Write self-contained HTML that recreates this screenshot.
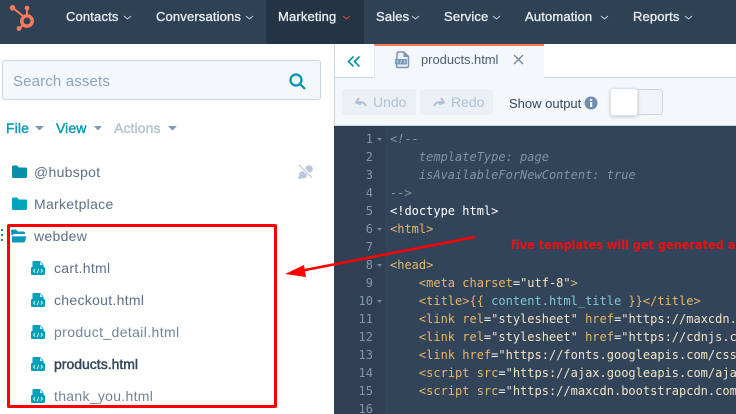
<!DOCTYPE html>
<html><head><meta charset="utf-8">
<style>
*{box-sizing:border-box}
html,body{margin:0;padding:0;width:736px;height:414px;overflow:hidden;background:#fff}
body{position:relative;font-family:"Liberation Sans",sans-serif}
.a{position:absolute;white-space:nowrap}
.n{top:9px;line-height:16px;font-size:13px;color:#e6ebf0;font-weight:normal;letter-spacing:.15px;-webkit-text-stroke:.35px #e6ebf0}
.t{font-size:14px;line-height:18px;color:#5c7088;letter-spacing:.3px}
.c{position:absolute;left:390px;font:12px/18px "DejaVu Sans Mono",monospace;white-space:pre;color:#e5b567}
.g{position:absolute;width:42px;text-align:right;left:331px;font:12px/18px "DejaVu Sans Mono",monospace;color:#8296aa}
.w{color:#fff}.e{color:#f2e3c4}.q{color:#fff}.b{color:#7fc6d6}.m{color:#8093a8;font-style:italic}
.h{font-size:14px;line-height:18px;font-weight:normal;-webkit-text-stroke:.4px currentColor;letter-spacing:.1px}
</style></head><body>
<div class="a" style="left:0;top:0;width:736px;height:44px;background:#2f4154"></div>
<div class="a" style="left:266px;top:0;width:98px;height:44px;background:#253444"></div>
<svg class="a" style="left:8px;top:3px" width="30" height="30" viewBox="0 0 30 30"><g fill="none" stroke="#ff7a59" stroke-width="2"><circle cx="19" cy="18" r="5.200" stroke-width="3.400"/><path d="M5 5 L15 13M19 5V12M15 22L11 26"/></g><g fill="#ff7a59"><circle cx="4.500" cy="4.800" r="2.800"/><circle cx="19" cy="5" r="2.300"/><circle cx="11" cy="25.500" r="2.400"/></g></svg>
<div class="a n" style="left:66px">Contacts</div>
<div class="a n" style="left:156px">Conversations</div>
<div class="a n" style="left:278px">Marketing</div>
<div class="a n" style="left:376px">Sales</div>
<div class="a n" style="left:444px">Service</div>
<div class="a n" style="left:525px">Automation</div>
<div class="a n" style="left:633px">Reports</div>
<svg class="a" style="left:0;top:0" width="736" height="44" fill="none" stroke="#c5d0da" stroke-width="1"><path d="M124 16l3.500 3 3.500-3M246 16l3.500 3 3.500-3M412 16l3.500 3 3.500-3M493 16l3.500 3 3.500-3M601 16l3.500 3 3.500-3M685 16l3.500 3 3.500-3"/><path d="M343 16l3.500 3 3.500-3" stroke="#d0553f"/></svg>

<div class="a" style="left:2px;top:60px;width:319px;height:40px;background:#f5f8fa;border:1px solid #cbd6e2;border-radius:3px"></div>
<div class="a" style="left:13px;top:71px;font-size:15px;line-height:20px;color:#8ea4ba;letter-spacing:.15px;padding-top:1px">Search assets</div>
<svg class="a" style="left:288px;top:72px" width="19" height="19" fill="none" stroke="#0091ae" stroke-width="2.200"><circle cx="8" cy="8" r="5.500"/><path d="M12 12l5 5"/></svg>
<div class="a h" style="left:6px;top:119px;color:#0f97b2">File</div>
<div class="a h" style="left:56px;top:119px;color:#0f97b2">View</div>
<div class="a h" style="left:114px;top:119px;color:#b4c3d3">Actions</div>
<svg class="a" style="left:0;top:120px" width="190" height="16"><path d="M35 6h9l-4.500 4.500zM94 6h8l-4 4.500zM168 6h9l-4.500 4.500z" fill="#7c98b6"/></svg>

<svg class="a" style="left:12px;top:165px" width="15" height="14"><path d="M0 2q0-1.500 1.500-1.500h3.500l2 2h6.500q1.500 0 1.500 1.500v7.500q0 1.500-1.500 1.500h-12q-1.500 0-1.500-1.500z" fill="#0a8fab"/></svg>
<div class="a t" style="left:34px;top:163px">@hubspot</div>
<svg class="a" style="left:297px;top:163px" width="18" height="18"><circle cx="12" cy="6" r="3.800" fill="#b9c8da"/><path d="M1 16l2-7 3-1 4 4-1 3z" fill="#b9c8da"/><path d="M2 2l14 13" stroke="#fff" stroke-width="3"/><path d="M2 2l13 13" stroke="#b9c8da" stroke-width="1.200"/></svg>
<svg class="a" style="left:12px;top:197px" width="15" height="14"><path d="M0 2q0-1.500 1.500-1.500h3.500l2 2h6.500q1.500 0 1.500 1.500v7.500q0 1.500-1.500 1.500h-12q-1.500 0-1.500-1.500z" fill="#00a4bd"/></svg>
<div class="a t" style="left:34px;top:195px">Marketplace</div>
<svg class="a" style="left:11px;top:229px" width="16" height="14"><path d="M0 2q0-1.500 1.500-1.500h3.500l2 2h5.500q1.500 0 1.500 1.500v1h-11l-2.500 2z" fill="#0a9ab5"/><path d="M1 7h14.500l-1.500 5.500q-.3 1-1.500 1h-10q-1.500 0-1.500-1z" fill="#0a9ab5"/><path d="M.5 6.800h14.800" stroke="#fff" stroke-width="1"/></svg>
<div class="a t" style="left:34px;top:227px">webdew</div>
<svg class="a" style="left:0;top:229px" width="4" height="16"><g fill="#516f90"><rect x="1" y="0" width="2" height="2"/><rect x="1" y="5" width="2" height="2"/><rect x="1" y="10" width="2" height="2"/></g></svg>

<svg width="0" height="0" style="position:absolute"><defs><symbol id="f" viewBox="0 0 14 14"><path d="M1.500 1q0-1 1-1h6.500l3.500 3.500v2.500h.5q1 0 1 1v6q0 1-1 1h-12q-1 0-1-1v-6q0-1 1-1h.5z" fill="#00a0bb"/><path d="M3 2h5v3h3v1h-8z" fill="#00a0bb"/><path d="M9 1v3h3z" fill="#e4f6f9"/><path d="M4 8.200l-1.400 1.700 1.400 1.700M10 8.200l1.400 1.700-1.400 1.700M7.900 7.800l-1.800 4.300" stroke="#fff" fill="none" stroke-width=".9"/></symbol></defs></svg>
<svg class="a" style="left:31px;top:261px" width="14" height="14"><use href="#f"/></svg>
<div class="a t" style="left:54px;top:259px">cart.html</div>
<svg class="a" style="left:31px;top:293px" width="14" height="14"><use href="#f"/></svg>
<div class="a t" style="left:54px;top:291px">checkout.html</div>
<svg class="a" style="left:31px;top:325px" width="14" height="14"><use href="#f"/></svg>
<div class="a t" style="left:54px;top:323px;color:#718499;letter-spacing:.38px">product_detail.html</div>
<svg class="a" style="left:31px;top:357px" width="14" height="14"><use href="#f"/></svg>
<div class="a t" style="left:54px;top:355px;color:#33475b;letter-spacing:0;-webkit-text-stroke:.45px #33475b">products.html</div>
<svg class="a" style="left:31px;top:389px" width="14" height="14"><use href="#f"/></svg>
<div class="a t" style="left:54px;top:387px;color:#718499">thank_you.html</div>

<div class="a" style="left:334px;top:44px;width:402px;height:34px;background:#fff;border-bottom:1px solid #cbd6e2"></div>
<div class="a" style="left:334px;top:44px;width:1px;height:82px;background:#cbd6e2"></div>
<svg class="a" style="left:347px;top:55px" width="14" height="14" fill="none" stroke="#0091ae" stroke-width="1.600"><path d="M6.500 1.500L1.500 6.500l5 5M12.500 1.500l-5 5 5 5"/></svg>
<div class="a" style="left:374px;top:44px;width:170px;height:35px;background:#f5f8fa;border-top:2px solid #ff7a59;border-left:1px solid #dfe3eb"></div>
<svg class="a" style="left:394px;top:51px" width="17" height="18"><path d="M3 2.500q0-1.500 1.500-1.500h5.500l4.500 4.500v9.500q0 1.500-1.500 1.500h-9q-1.500 0-1.500-1.500z" fill="#e9eff5" stroke="#7c98b6" stroke-width="1.500"/><path d="M9.500 1v5h5" fill="#7c98b6"/><rect x="1" y="8" width="12" height="5.500" rx="1" fill="#7c98b6"/><path d="M4 9.500l-1.200 1.300 1.200 1.300M10 9.500l1.200 1.300-1.200 1.300M7.700 9.200l-1.400 3.200" stroke="#dfe7f0" fill="none" stroke-width=".7"/></svg>
<div class="a" style="left:421px;top:51px;font-size:13px;line-height:18px;color:#4b5f75;letter-spacing:-.05px">products.html</div>
<svg class="a" style="left:513px;top:54px" width="11" height="11" stroke="#6f87a1" stroke-width="1.300"><path d="M1 1l9 9M10 1l-9 9"/></svg>

<div class="a" style="left:335px;top:78px;width:401px;height:48px;background:#f5f8fa;border-bottom:1px solid #cbd6e2"></div>
<div class="a" style="left:374px;top:77px;width:170px;height:2px;background:#f5f8fa"></div>
<div class="a" style="left:342px;top:89px;width:74px;height:26px;background:#eaf0f6;border-radius:3px"></div>
<div class="a" style="left:420px;top:89px;width:73px;height:26px;background:#eaf0f6;border-radius:3px"></div>
<svg class="a" style="left:354px;top:96px" width="14" height="12" fill="none" stroke="#b0c1d4" stroke-width="2"><path d="M12 10q-2-5-9-3.500M5 2L2 6.500l5 2"/></svg>
<svg class="a" style="left:432px;top:96px" width="14" height="12" fill="none" stroke="#b0c1d4" stroke-width="2"><path d="M2 10q2-5 9-3.500M9 2l3 4.500-5 2"/></svg>
<div class="a" style="left:373px;top:93px;font-size:14px;line-height:18px;color:#b0c1d4">Undo</div>
<div class="a" style="left:451px;top:93px;font-size:14px;line-height:18px;color:#b0c1d4">Redo</div>
<div class="a" style="left:509px;top:95px;font-size:13px;line-height:18px;color:#33475b">Show output</div>
<svg class="a" style="left:584px;top:96px" width="14" height="14"><circle cx="7" cy="7" r="6.500" fill="#6f8db0"/><rect x="6" y="6" width="2.200" height="5" fill="#fff"/><rect x="6" y="3" width="2.200" height="2" fill="#fff"/></svg>
<div class="a" style="left:611px;top:89px;width:52px;height:26px;background:#f0f4f8;border:1px solid #cbd6e2;border-radius:3px"></div>
<div class="a" style="left:610px;top:88px;width:28px;height:28px;background:#fff;border:1px solid #dbe3ec;border-radius:3px;box-shadow:0 1px 3px rgba(0,0,0,.2)"></div>

<div class="a" style="left:334px;top:126px;width:402px;height:288px;background:#32445a"></div>
<div class="a" style="left:334px;top:126px;width:51px;height:288px;background:#2f4054"></div>

<div class="g" style="top:130px">1</div><div class="g" style="top:148px">2</div><div class="g" style="top:166px">3</div><div class="g" style="top:184px">4</div><div class="g" style="top:202px">5</div><div class="g" style="top:220px">6</div><div class="g" style="top:238px">7</div><div class="g" style="top:256px">8</div><div class="g" style="top:274px">9</div><div class="g" style="top:292px">10</div><div class="g" style="top:310px">11</div><div class="g" style="top:328px">12</div><div class="g" style="top:346px">13</div><div class="g" style="top:364px">14</div><div class="g" style="top:382px">15</div><div class="g" style="top:400px">16</div>
<svg class="a" style="left:376px;top:126px" width="8" height="190" fill="#71869c"><path d="M1 12h5l-2.500 3zM1 102h5l-2.500 3zM1 138h5l-2.500 3zM1 174h5l-2.500 3z"/></svg>

<div class="a" style="left:0;top:0;width:736px;height:414px;overflow:hidden">
<div class="c m" style="top:130px">&lt;!--</div>
<div class="c m" style="top:148px">    templateType: page</div>
<div class="c m" style="top:166px">    isAvailableForNewContent: true</div>
<div class="c m" style="top:184px">--&gt;</div>
<div class="c w" style="top:202px">&lt;!doctype html&gt;</div>
<div class="c" style="top:220px">&lt;html&gt;</div>
<div class="c" style="top:256px">&lt;head&gt;</div>
<div class="c" style="top:274px">    &lt;meta charset<span class="q">=</span><span class="e">"utf-8"</span>&gt;</div>
<div class="c" style="top:292px">    &lt;title&gt;{{ <span class="b">content.html_title</span> }}&lt;/title&gt;</div>
<div class="c" style="top:310px">    &lt;link rel<span class="q">=</span><span class="e">"stylesheet"</span> href<span class="q">=</span><span class="e">"https://maxcdn.bootstr</span></div>
<div class="c" style="top:328px">    &lt;link rel<span class="q">=</span><span class="e">"stylesheet"</span> href<span class="q">=</span><span class="e">"https://cdnjs.cloudfl</span></div>
<div class="c" style="top:346px">    &lt;link href<span class="q">=</span><span class="e">"https://fonts.googleapis.com/css?f</span></div>
<div class="c" style="top:364px">    &lt;script src<span class="q">=</span><span class="e">"https://ajax.googleapis.com/ajax/</span></div>
<div class="c" style="top:382px">    &lt;script src<span class="q">=</span><span class="e">"https://maxcdn.bootstrapcdn.com/b</span></div>
<div class="a" style="left:511px;top:236px;font:bold 12.500px/18px 'DejaVu Sans Condensed','Liberation Sans Narrow','Liberation Sans',sans-serif;color:#f01010;letter-spacing:.03px">five templates will get generated a</div>
</div>

<div class="a" style="left:7px;top:224px;width:270px;height:184px;border:3px solid #fe0000;border-radius:2px"></div>
<svg class="a" style="left:280px;top:230px" width="200" height="50"><path d="M195 7L20 41" stroke="#f00" stroke-width="2.500"/><path d="M5 44L24 35l2 12z" fill="#f00"/></svg>
</body></html>
